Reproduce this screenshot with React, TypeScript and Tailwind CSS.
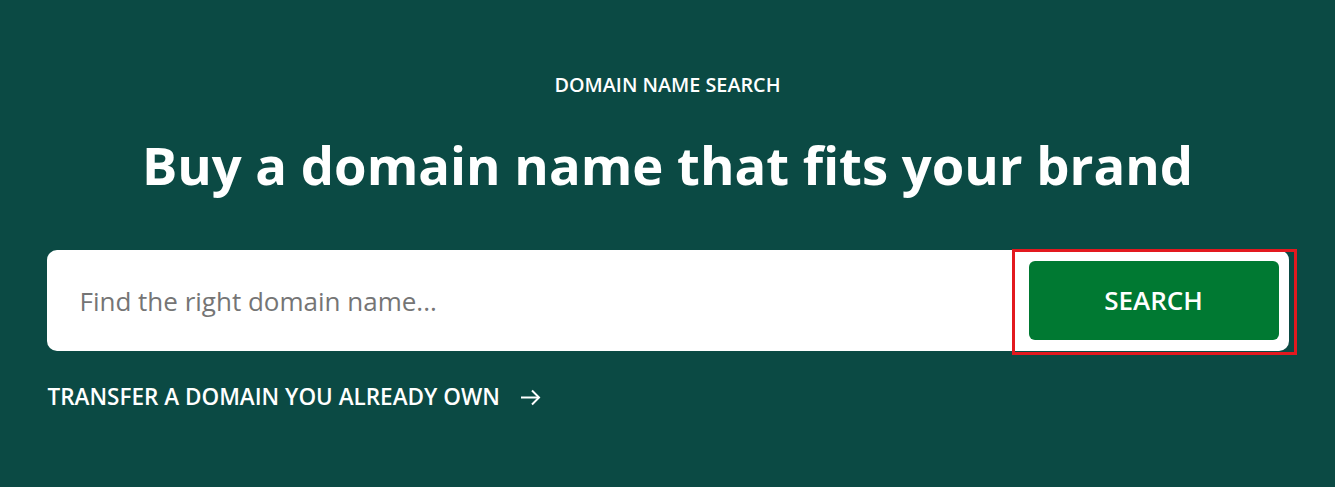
const App = () => {
  return (
    <div
      className="min-h-[487px] w-full bg-[#0b4a44] text-white"
      style={{ fontFamily: '"Open Sans", "Noto Sans", sans-serif' }}
    >
      <div className="mx-auto max-w-[1242px] pt-[73px]">
        <p className="text-center text-[19.8px] font-semibold leading-6">DOMAIN NAME SEARCH</p>
        <h1 className="mt-[36px] text-center text-[52.6px] font-bold leading-[64px]">
          Buy a domain name that fits your brand
        </h1>
        <div className="relative mt-[53px] flex h-[101px] items-center rounded-[10px] bg-white pl-[33px] pr-[10px]">
          <input
            type="text"
            placeholder="Find the right domain name..."
            className="h-full flex-1 bg-transparent text-[26px] text-[#333] outline-none placeholder:text-[#757575]"
          />
          <button className="h-[79px] w-[250px] rounded-[6px] bg-[#007932] text-[26px] font-semibold text-white">
            SEARCH
          </button>
          <div className="pointer-events-none absolute -top-[1px] left-[965px] h-[106px] w-[285px] border-[3px] border-[#e3191f]" />
        </div>
        <a href="#" className="mt-[31px] inline-flex items-center gap-[20px] pl-px text-[22.5px] font-semibold leading-[30px]">
          TRANSFER A DOMAIN YOU ALREADY OWN
          <svg width="21" height="17" viewBox="0 0 21 17" fill="none" stroke="currentColor" strokeWidth="2">
            <path d="M1 8.5H19" />
            <path d="M12 1.5L19 8.5L12 15.5" />
          </svg>
        </a>
      </div>
    </div>
  );
};

export default App;
